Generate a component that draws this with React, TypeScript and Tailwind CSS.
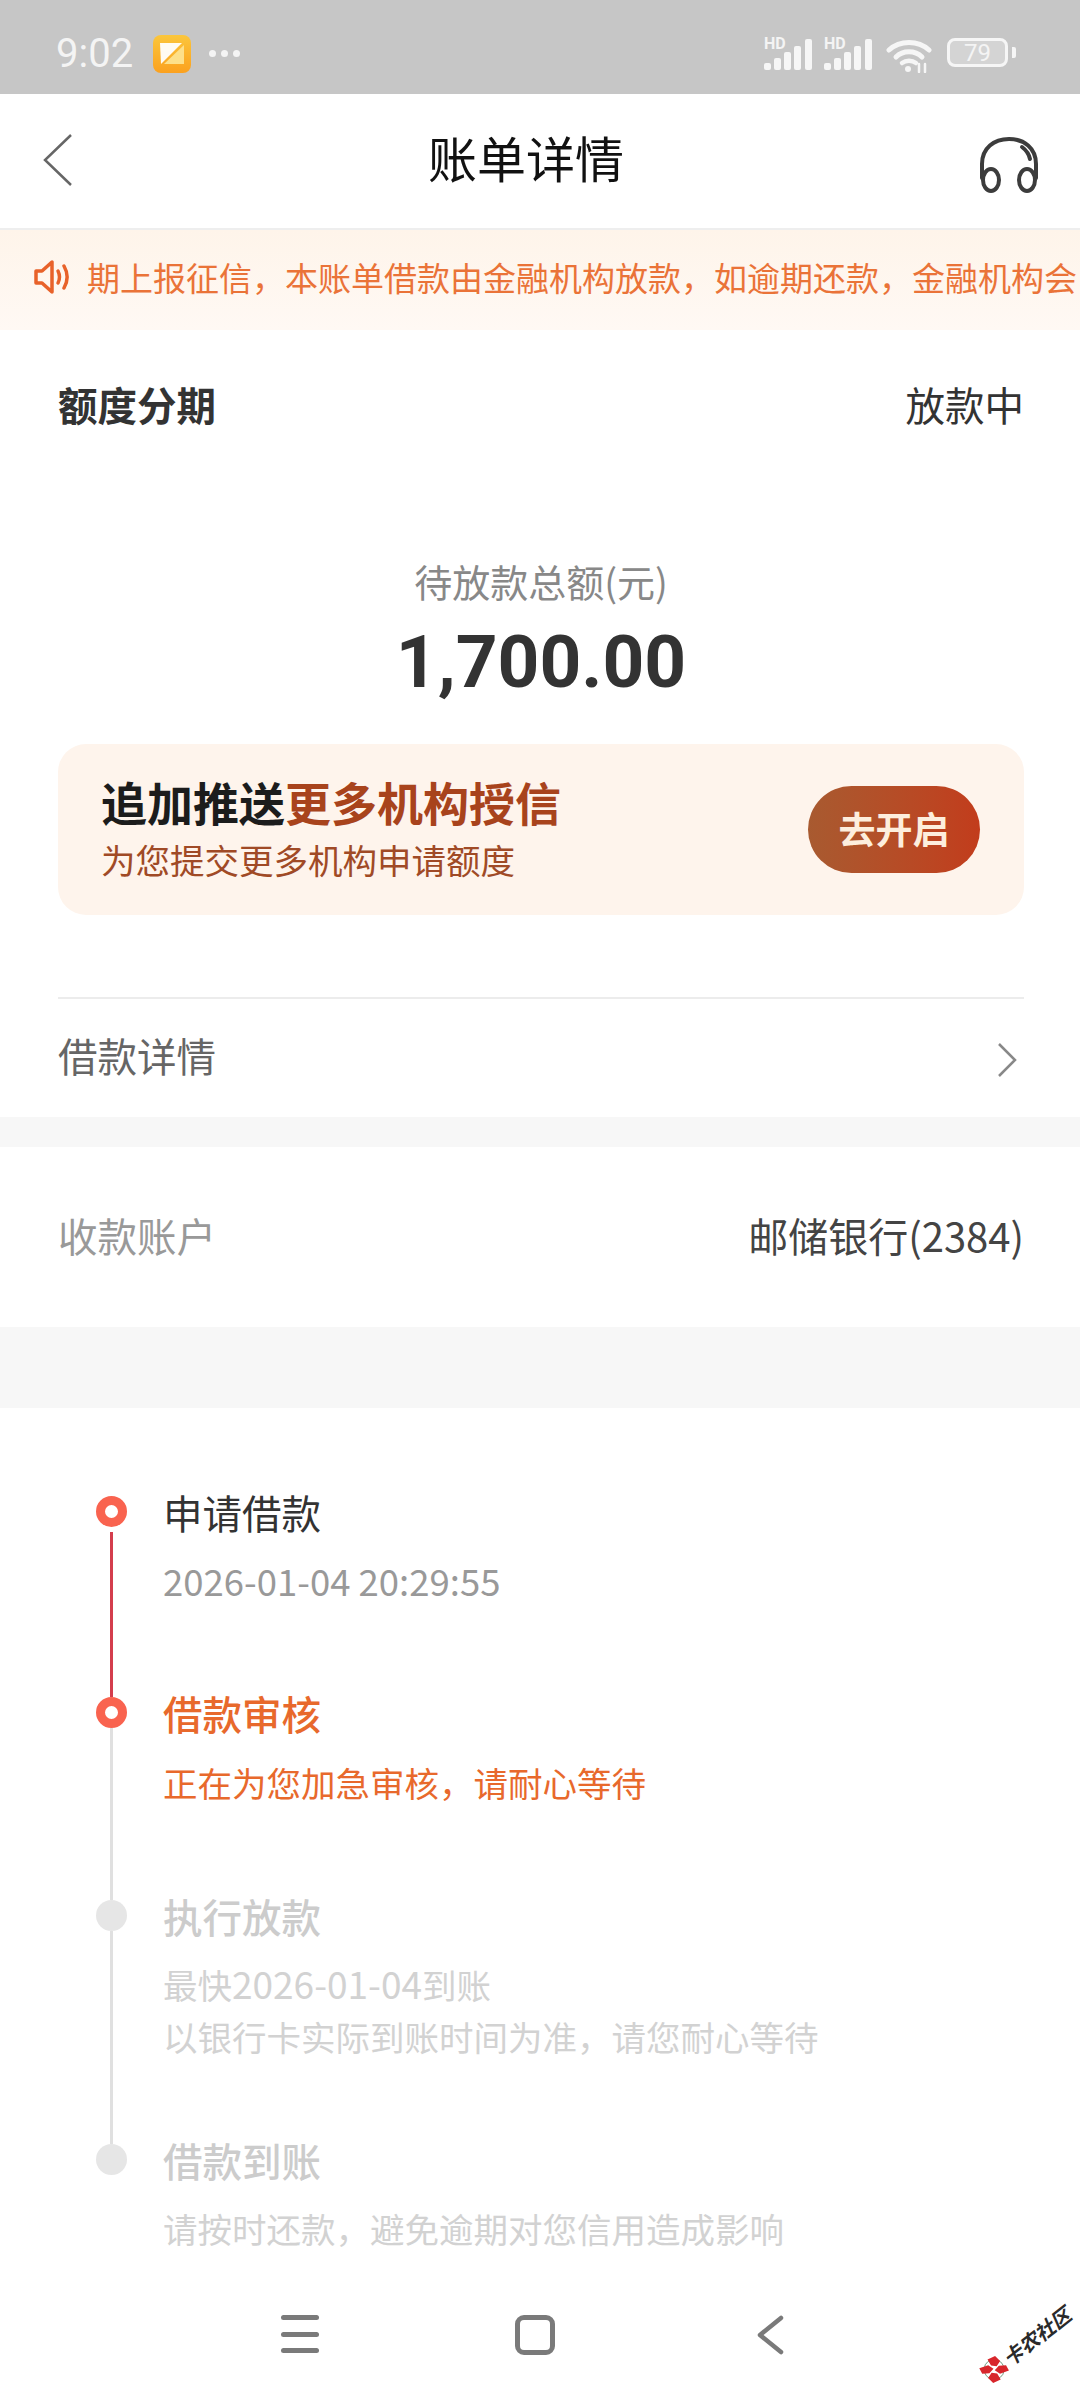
import React from "react";

function Signal() {
  return (
    <div className="relative w-[48px] h-[32px]">
      <span className="absolute left-0 top-[-2px] text-[16px] leading-[16px] font-bold text-[#f4f4f4] font-['Roboto',sans-serif]">HD</span>
      <svg width="48" height="32" viewBox="0 0 48 32" className="absolute left-0 top-0">
        <g fill="#f6f6f6">
          <rect x="0" y="25" width="7" height="7" rx="2" />
          <rect x="10" y="20" width="7" height="12" rx="2" />
          <rect x="20" y="14" width="7" height="18" rx="2" />
          <rect x="30" y="8" width="7" height="24" rx="2" />
          <rect x="41" y="1" width="7" height="31" rx="2" />
        </g>
      </svg>
    </div>
  );
}

function Row({
  dot,
  line,
  h,
  children,
}: {
  dot: string;
  line?: string;
  h: string;
  children: React.ReactNode;
}) {
  return (
    <div className={`flex ${h}`}>
      <div className="flex flex-col items-center w-[31px] shrink-0">
        {dot === "on" ? (
          <div className="w-[31px] h-[31px] rounded-full border-[9.5px] border-[#f9634f] bg-white shrink-0" />
        ) : (
          <div className="w-[31px] h-[31px] rounded-full bg-[#e6e6e6] shrink-0" />
        )}
        {line === "red" && <div className="w-[3px] flex-1 mt-[5px] bg-[#d43d4d]" />}
        {line === "gray" && <div className="w-[3px] flex-1 bg-[#e0e0e0]" />}
      </div>
      <div className="ml-[36px] flex flex-col">{children}</div>
    </div>
  );
}

export default function App() {
  return (
    <div className="relative w-[1080px] h-[2400px] overflow-hidden bg-white font-['Noto_Sans_CJK_SC','Noto_Sans',sans-serif] text-[#333]">
      {/* status bar */}
      <div className="h-[94px] bg-[#c6c6c6] flex items-start relative">
        <span className="ml-[56px] w-[97px] mt-[29px] text-[40px] leading-[50px] text-[#f4f4f4] font-['Roboto',sans-serif]">9:02</span>
        <svg width="38" height="38" viewBox="0 0 38 38" className="mt-[35px]">
          <defs>
            <linearGradient id="ap" x1="0" y1="0" x2="0" y2="1">
              <stop offset="0" stopColor="#fbc63c" />
              <stop offset="1" stopColor="#fba11f" />
            </linearGradient>
          </defs>
          <rect width="38" height="38" rx="8" fill="url(#ap)" />
          <path d="M7 8h22L8 29z" fill="#fff" opacity="0.95" />
          <path d="M31 10v19H11z" fill="#fde08a" />
        </svg>
        <div className="ml-[18px] mt-[50px] flex gap-[5px]">
          <span className="w-[7px] h-[7px] rounded-full bg-[#f4f4f4]" />
          <span className="w-[7px] h-[7px] rounded-full bg-[#f4f4f4]" />
          <span className="w-[7px] h-[7px] rounded-full bg-[#f4f4f4]" />
        </div>
        <div className="ml-auto mr-[64px] mt-[38px] flex items-start">
          <Signal />
          <div className="w-[12px]" />
          <Signal />
          <svg width="46" height="34" viewBox="0 0 46 34" className="ml-[14px] mt-[1px]" fill="none" stroke="#f6f6f6" strokeLinecap="round">
            <path d="M3 11C14 1 32 1 43 11" strokeWidth="5" />
            <path d="M10 18C17 11 29 11 36 18" strokeWidth="5" />
            <path d="M16 24C20 21 26 21 30 24" strokeWidth="4.5" />
            <circle cx="22" cy="30" r="3" fill="#f6f6f6" stroke="none" />
            <path d="M33 25v8M39 25v8" strokeWidth="2.5" />
          </svg>
          <div className="ml-[15px] w-[61px] h-[29px] rounded-[8px] border-[3px] border-[#f6f6f6] flex items-center justify-center text-[24px] leading-none text-[#f4f4f4] bg-[#d4d4d4] font-['Roboto',sans-serif]">
            79
          </div>
          <div className="ml-[4px] mt-[9px] w-[4px] h-[11px] rounded-r-[2px] bg-[#f6f6f6]" />
        </div>
      </div>

      {/* header */}
      <div className="h-[136px] border-b-2 border-[#eeeeee] relative flex items-center justify-center pr-[28px]">
        <svg width="32" height="54" viewBox="0 0 32 54" className="absolute left-[42px] top-[39px]" fill="none" stroke="#666" strokeWidth="2.5">
          <path d="M29 2L3 27l26 25" />
        </svg>
        <span className="text-[49px] leading-[60px] text-[#111] mb-[8px]">账单详情</span>
        <svg width="60" height="58" viewBox="0 0 60 58" className="absolute left-[979px] top-[42px]" fill="none" stroke="#3c3c3c" strokeWidth="4" strokeLinecap="round">
          <path d="M3 42V28C3 12 15 3 30 3s27 9 27 25v14" />
          <path d="M43 11c4 3 7 7 8 12" />
          <ellipse cx="12" cy="44" rx="8" ry="11" />
          <ellipse cx="48" cy="44" rx="8" ry="11" />
        </svg>
      </div>

      {/* notice */}
      <div className="h-[100px] bg-gradient-to-b from-[#fef4ea] to-[#fff9f4] flex items-center pb-[6px] overflow-hidden whitespace-nowrap">
        <svg width="38" height="36" viewBox="0 0 38 36" className="ml-[33px] shrink-0" fill="none" stroke="#e8622a" strokeWidth="3.5" strokeLinejoin="round" strokeLinecap="round">
          <path d="M3 12h6L19 3v30L9 24H3z" />
          <path d="M25 12c2 4 2 8 0 12" />
          <path d="M31 7c4 7 4 15 0 22" />
        </svg>
        <span className="ml-[16px] text-[33px] leading-[46px] text-[#ea7338]">
          期上报征信，本账单借款由金融机构放款，如逾期还款，金融机构会
        </span>
      </div>

      {/* summary */}
      <div className="pl-[58px] pr-[56px]">
        <div className="h-[152px] flex items-center justify-between pb-[5px]">
          <span className="text-[39.5px] leading-[50px] font-bold text-[#333]">额度分期</span>
          <span className="text-[39.5px] leading-[50px] text-[#333]">放款中</span>
        </div>
        <div className="mt-[74px] text-center text-[38px] leading-[50px] text-[#888]">待放款总额(元)</div>
        <div className="mt-[6px] text-center text-[73px] leading-[100px] font-bold text-[#333] font-['Roboto',sans-serif]">1,700.00</div>
        <div className="mt-[32px] h-[171px] rounded-[28px] bg-[#fef4ec] pl-[43px] pr-[44px] flex items-center justify-between">
          <div>
            <div className="text-[46px] leading-[58px] font-bold text-[#1c1c1c]">
              追加推送<span className="text-[#a8431c]">更多机构授信</span>
            </div>
            <div className="text-[34.5px] leading-[46px] mt-[6px] mb-[6px] text-[#a04a26]">为您提交更多机构申请额度</div>
          </div>
          <div className="w-[172px] h-[87px] rounded-full bg-gradient-to-r from-[#a85a30] to-[#c23c1c] flex items-center justify-center text-[37px] leading-none font-bold text-[#fdeedd] pb-[2px]">
            去开启
          </div>
        </div>
        <div className="mt-[82px] h-[2px] bg-[#ececec]" />
        <div className="h-[118px] flex items-center justify-between">
          <span className="text-[39.5px] leading-[50px] text-[#666] mb-[6px]">借款详情</span>
          <svg width="22" height="36" viewBox="0 0 22 36" fill="none" stroke="#888" strokeWidth="2.5" className="mr-[6px] mt-[4px]">
            <path d="M3 2l16 16L3 34" />
          </svg>
        </div>
      </div>
      <div className="h-[30px] bg-[#f7f7f7]" />
      <div className="h-[180px] pr-[56px] pl-[58px] flex items-center justify-between pb-[5px]">
        <span className="text-[39.5px] leading-[50px] text-[#999]">收款账户</span>
        <span className="text-[40px] leading-[50px] text-[#444]">邮储银行(2384)</span>
      </div>
      <div className="h-[81px] bg-[#f7f7f7]" />

      {/* timeline */}
      <div className="pl-[96px] pt-[88px]">
        <Row dot="on" line="red" h="h-[201px]">
          <div className="text-[39.5px] leading-[31px] text-[#333]">申请借款</div>
          <div className="mt-[29px] text-[36.5px] leading-[50px] text-[#999]">2026-01-04 20:29:55</div>
        </Row>
        <Row dot="on" line="gray" h="h-[203px]">
          <div className="text-[39.5px] leading-[31px] text-[#e8692c] font-medium">借款审核</div>
          <div className="mt-[29px] text-[34.5px] leading-[50px] text-[#e8692c]">正在为您加急审核，请耐心等待</div>
        </Row>
        <Row dot="off" line="gray" h="h-[244px]">
          <div className="text-[39.5px] leading-[31px] text-[#cccccc] font-medium">执行放款</div>
          <div className="mt-[26px] text-[34.5px] leading-[52px] text-[#d2d2d2]">
            最快<span className="text-[37px]">2026-01-04</span>到账
            <br />
            以银行卡实际到账时间为准，请您耐心等待
          </div>
        </Row>
        <Row dot="off" h="h-[78px]">
          <div className="text-[39.5px] leading-[31px] text-[#cccccc] font-medium">借款到账</div>
          <div className="mt-[28px] text-[34.5px] leading-[50px] text-[#d2d2d2] whitespace-nowrap">请按时还款，避免逾期对您信用造成影响</div>
        </Row>
      </div>

      {/* navigation */}
      <div className="mt-[93px] pl-[281px] flex items-start">
        <div className="w-[38px] h-[38px] flex flex-col justify-between">
          <span className="h-[5px] rounded-full bg-[#7a7a7a]" />
          <span className="h-[5px] rounded-full bg-[#7a7a7a]" />
          <span className="h-[5px] rounded-full bg-[#7a7a7a]" />
        </div>
        <div className="ml-[196px] w-[40px] h-[40px] rounded-[9px] border-[5px] border-[#7a7a7a]" />
        <svg width="28" height="40" viewBox="0 0 28 40" fill="none" stroke="#7a7a7a" strokeWidth="4.5" strokeLinecap="round" strokeLinejoin="round" className="ml-[201px]">
          <path d="M25 3L4 20l21 17" />
        </svg>
      </div>

      {/* watermark */}
      <div className="absolute left-[972px] top-[2330px] w-[112px] flex items-center -rotate-[38deg]">
        <svg width="26" height="26" viewBox="0 0 26 26" className="shrink-0">
          <circle cx="13" cy="13" r="10" fill="none" stroke="#5a8a6a" strokeWidth="0.8" />
          <path d="M2 3l9 3 2 6-6 1L1 9zM24 23l-9-3-2-6 6-1 6 4z" fill="#d8262c" />
          <path d="M14 1l8 2 1 7-6 2-4-4zM12 25l-8-2-1-7 6-2 4 4z" fill="#d8262c" />
        </svg>
        <span className="ml-[1px] text-[20px] leading-[26px] font-bold italic text-[#2a2a2a] whitespace-nowrap">卡农社区</span>
      </div>
    </div>
  );
}
